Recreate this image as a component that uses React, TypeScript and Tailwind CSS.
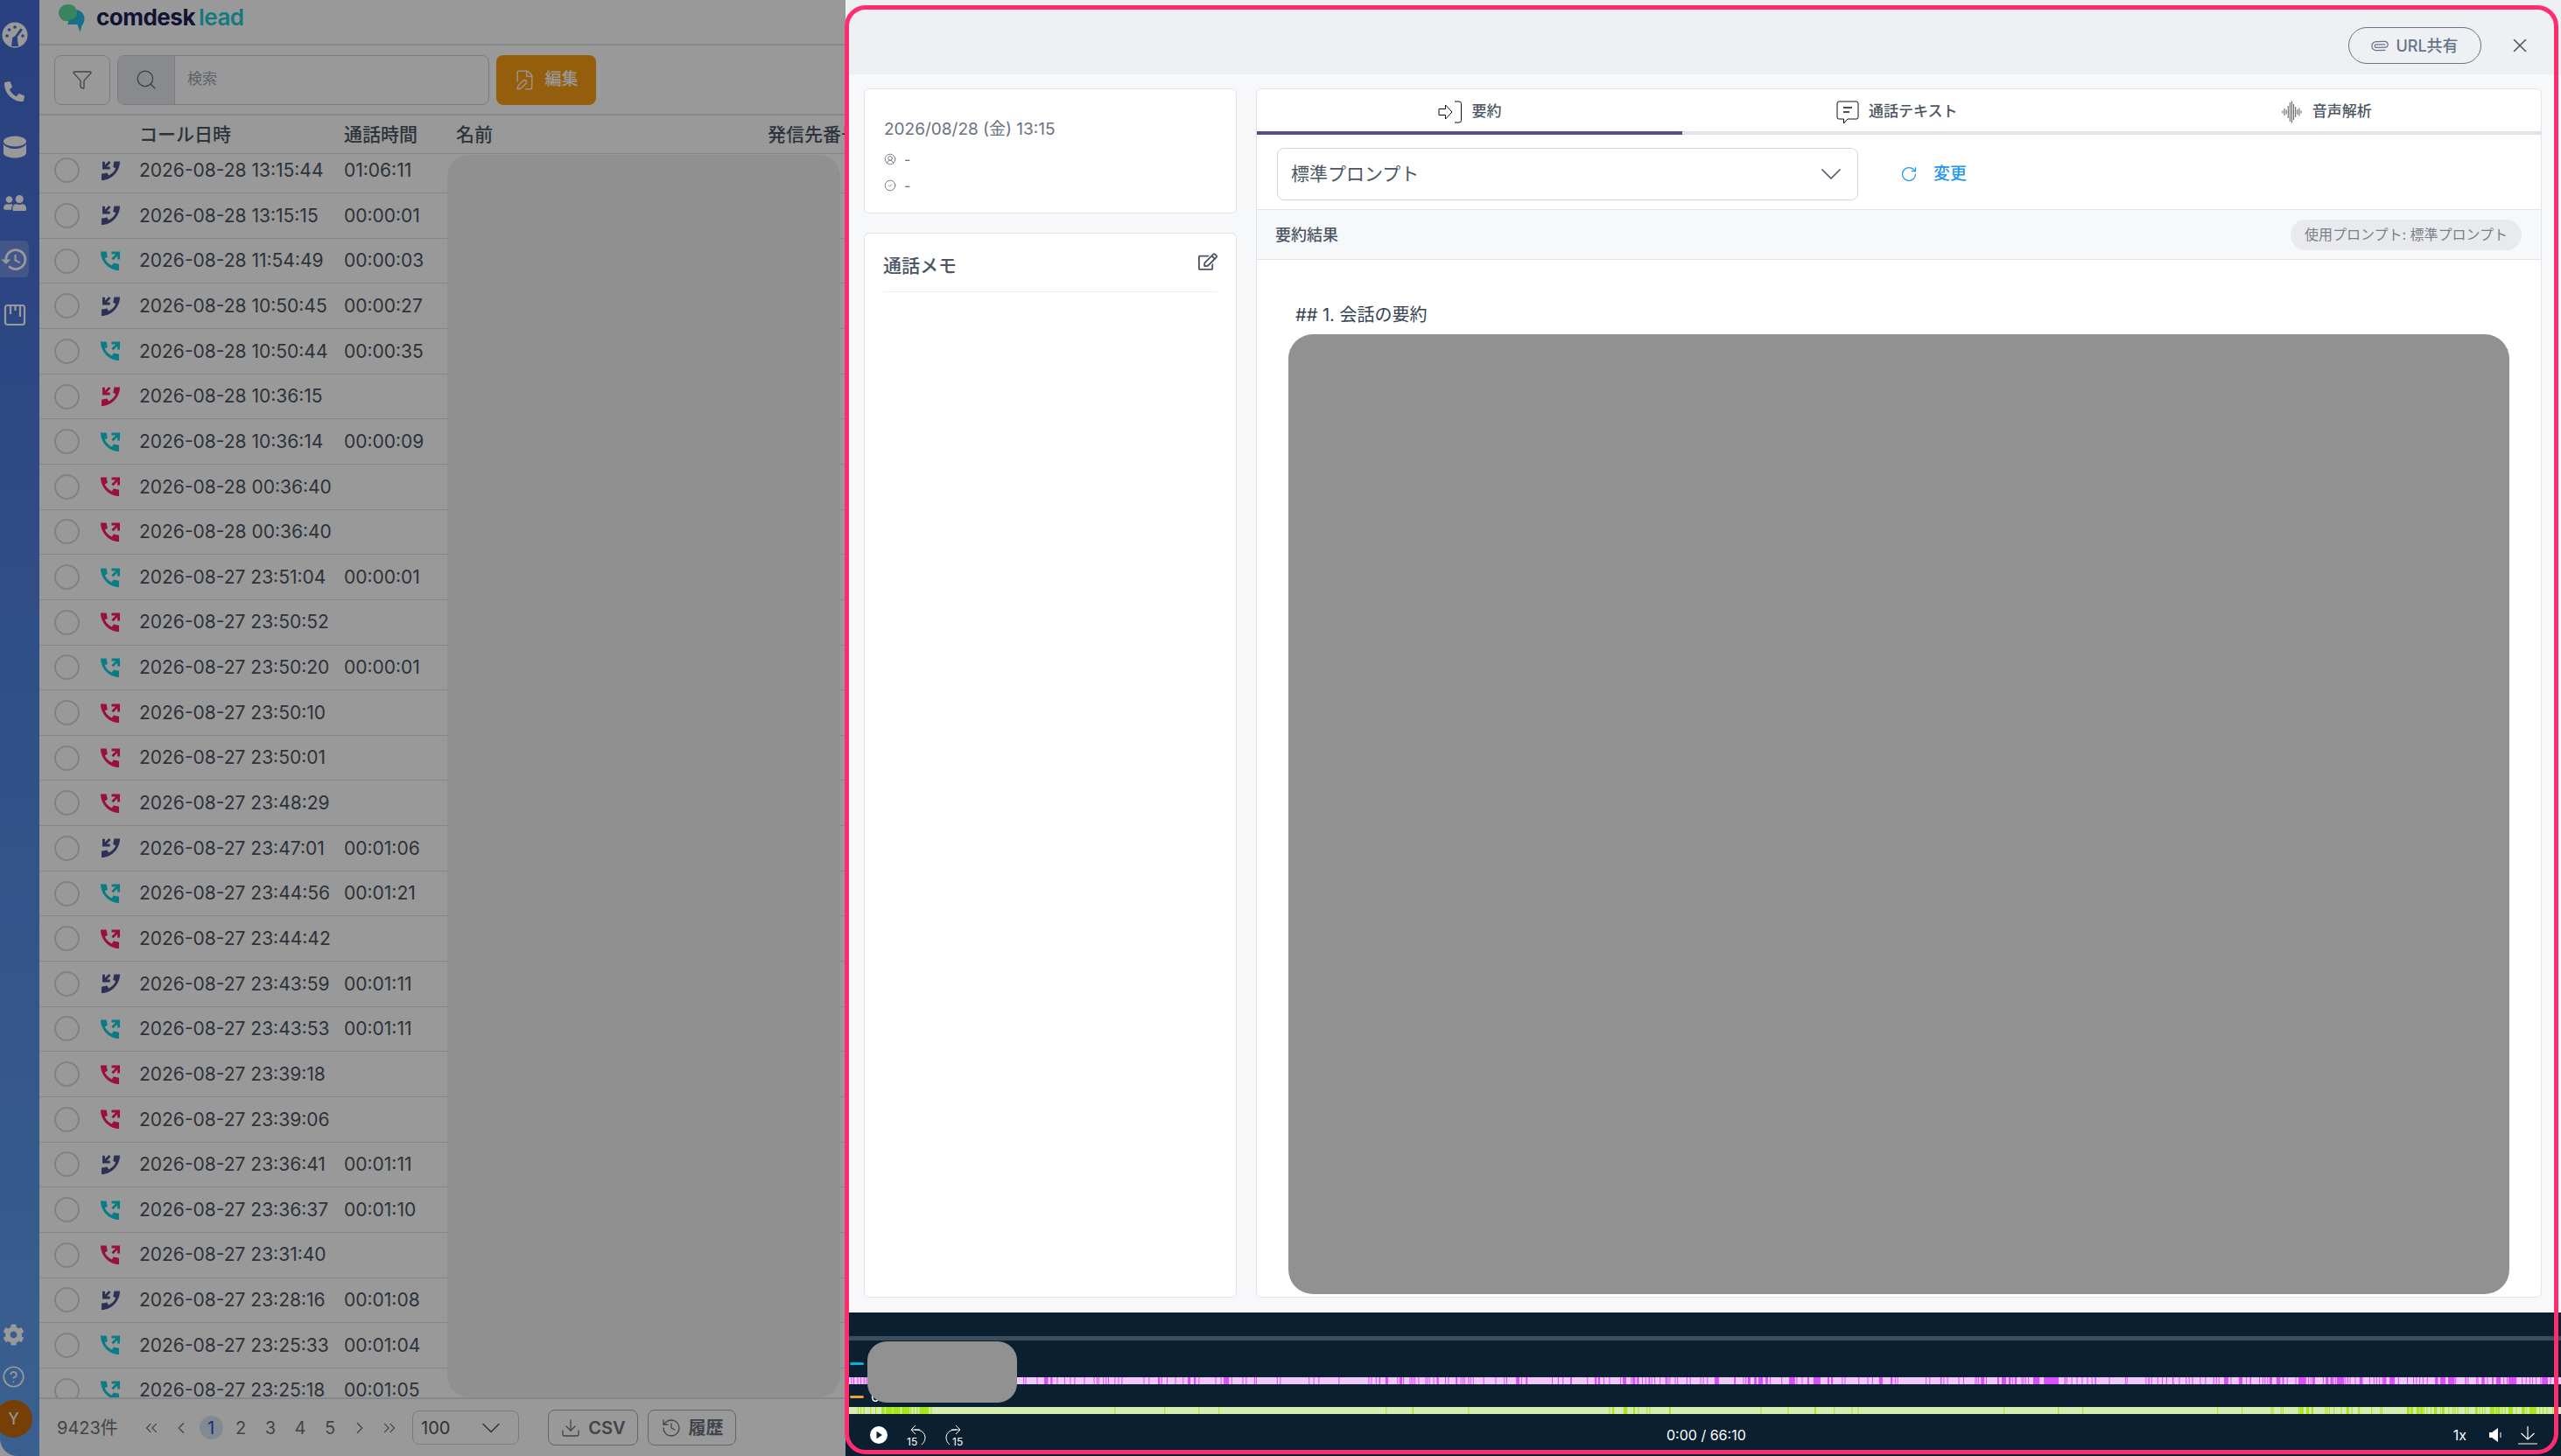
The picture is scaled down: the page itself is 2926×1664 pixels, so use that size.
import { ChevronDown, ChevronLeft, ChevronRight, ChevronsLeft, ChevronsRight, CircleCheck, CircleHelp, CircleUserRound, Download, FilePen, Funnel, History, Paperclip, RotateCw, Search, X } from "lucide-react";
import { FaCog, FaPhoneAlt, FaRegEdit, FaUserFriends } from "react-icons/fa";
import { MdHistory } from "react-icons/md";

type CallKind = "in" | "out" | "missedIn" | "missedOut";
type Mark = number | [number, number];

const calls: Array<[string, string, CallKind]> = [
  ["2026-08-28 13:15:44", "01:06:11", "in"],
  ["2026-08-28 13:15:15", "00:00:01", "in"],
  ["2026-08-28 11:54:49", "00:00:03", "out"],
  ["2026-08-28 10:50:45", "00:00:27", "in"],
  ["2026-08-28 10:50:44", "00:00:35", "out"],
  ["2026-08-28 10:36:15", "", "missedIn"],
  ["2026-08-28 10:36:14", "00:00:09", "out"],
  ["2026-08-28 00:36:40", "", "missedOut"],
  ["2026-08-28 00:36:40", "", "missedOut"],
  ["2026-08-27 23:51:04", "00:00:01", "out"],
  ["2026-08-27 23:50:52", "", "missedOut"],
  ["2026-08-27 23:50:20", "00:00:01", "out"],
  ["2026-08-27 23:50:10", "", "missedOut"],
  ["2026-08-27 23:50:01", "", "missedOut"],
  ["2026-08-27 23:48:29", "", "missedOut"],
  ["2026-08-27 23:47:01", "00:01:06", "in"],
  ["2026-08-27 23:44:56", "00:01:21", "out"],
  ["2026-08-27 23:44:42", "", "missedOut"],
  ["2026-08-27 23:43:59", "00:01:11", "in"],
  ["2026-08-27 23:43:53", "00:01:11", "out"],
  ["2026-08-27 23:39:18", "", "missedOut"],
  ["2026-08-27 23:39:06", "", "missedOut"],
  ["2026-08-27 23:36:41", "00:01:11", "in"],
  ["2026-08-27 23:36:37", "00:01:10", "out"],
  ["2026-08-27 23:31:40", "", "missedOut"],
  ["2026-08-27 23:28:16", "00:01:08", "in"],
  ["2026-08-27 23:25:33", "00:01:04", "out"],
  ["2026-08-27 23:25:18", "00:01:05", "out"],
];

// bar marks, read off the recording timeline: [origin px, scale, marks]
const pinkMarks: Array<[number, number, Mark[]]> = [
  [950, 2.24, [50, 56, 66, 74, 82, 88]],
  [1160, 2.613, [24, 30, 64, [86, 12], [105, 6], 124, 146, 163, 176, 205, 234, 243, 248, 262, 270, 277, 296, 307, 317, 383, 398, [426, 6], 436, 452, 477, 500, [515, 8], [533, 6], 547, 597, 613, [622, 16], 645, 678, 688, 713, 718, 781, 790, 876, 890, 905, 965, 1054, 1062, 1076, [1086, 4], [1105, 8], 1140, [1147, 8], 1158, 1177, 1182, 1187, 1192, 1203, 1224, 1229, 1235, 1248, [1258, 6], 1283, 1292, [1315, 5], 1329, 1335, 1340, 1352, 1358, 1366, 1397, 1433, 1459, 1466, [1495, 10], 1510, [1524, 5]]],
  [1760, 2.613, [34, 52, 66, [89, 5], 139, [162, 6], [172, 6], 188, 205, 238, [246, 10], 270, [275, 8], [288, 6], 303, 313, [323, 4], 331, 340, 356, [373, 5], 380, 385, 401, 408, 436, 446, 477, 485, 497, [520, 13], [578, 5], 605, 612, [619, 8], [638, 7], [651, 13], [672, 7], 685, 719, [742, 18], 764, 780, [797, 5], [815, 21], [857, 5], [868, 5], 900, 908, 949, 976, 990, [1011, 8], 1019, [1045, 6], 1058, 1065, 1150, 1161, [1194, 4], 1203, 1214, 1248, 1262, 1297, 1302, 1307, [1315, 10], 1330, [1364, 5], [1377, 13], [1398, 6], 1408, [1416, 6], 1436, 1441, 1447, 1456, [1471, 19], [1503, 44], 1565]],
  [2340, 2.676, [[0, 32], 50, 56, 71, 87, 103, 119, 133, [143, 4], 186, 235, 240, 298, [306, 4], 315, 334, 348, 361, [380, 4], 400, 421, 430, [440, 3], 464, 480, 505, 513, 521, [538, 13], 558, [583, 11], 605, [617, 4], 645, 655, 662, 670, [677, 8], [698, 12], [716, 5], 730, 756, [765, 24], 795, 802, [808, 8], 840, [849, 8], [863, 8], 871, 878, [883, 22], 908, 915, 922, 938, [952, 10], 982, 995, 1003, 1012, 1021, [1024, 10], [1044, 16], 1070, 1097, 1116, 1125, 1135, 1145, 1158, [1183, 9], [1199, 16], [1223, 20], 1245, [1275, 4], 1283, 1309, 1313, [1325, 10], 1342, [1357, 5], [1370, 14], 1392, 1402, [1407, 25], 1448, 1460, 1472, 1480, 1491, 1505, [1510, 18], 1535]],
];

const greenMarks: Array<[number, number, Mark[]]> = [
  [950, 2.24, [67, 74, 82, 99, 112, 128, [130, 6], [139, 17], [158, 18], [180, 20], 202, 210, 218, [225, 24], 254]],
  [1160, 2.613, [296, 445, 547, 607, 1106, [1185, 4], 1352]],
  [1760, 2.613, [205, [214, 6], [248, 11], [277, 5], 291, 317, 325, [384, 5], 657, 738, [818, 5], 876, 929, 947, 1383, 1545]],
  [2340, 2.676, [30, 105, 517, 592, 681, 686, 711, 717, 765, [769, 12], [789, 9], [805, 6], 847, 853, 859, 873, 895, [912, 8], 928, [948, 5], 988, 1015, 1020, [1097, 8], [1108, 8], [1126, 10], [1138, 8], 1148, 1157, 1169, [1180, 9], 1198, [1204, 8], 1224, 1237, 1243, 1251, 1275, 1283, [1306, 7], 1318, 1327, 1334, [1351, 14], [1368, 5], [1374, 8], 1387, [1396, 3], [1407, 14], 1430, [1448, 10], 1462, [1471, 22], 1502, 1512, 1524, 1542, [1555, 4]]],
];

function TimelineBar({ groups, color, className }: { groups: Array<[number, number, Mark[]]>; color: string; className: string }) {
  return (
    <svg className={className} width="1960" height="8" viewBox="0 0 1960 8">
      {groups.map(([origin, scale, marks]) =>
        marks.map((mark) => {
          const [start, size] = Array.isArray(mark) ? mark : [mark, 2.4];
          return <rect key={`${origin}-${start}`} x={origin + start / scale - 966} y="0" width={Math.max(size / scale, 1)} height="8" fill={color} />;
        }),
      )}
    </svg>
  );
}

function CallIcon({ kind }: { kind: CallKind }) {
  const incoming = kind === "in" || kind === "missedIn";
  const color = kind === "in" ? "text-[#4b5390]" : kind === "out" ? "text-[#12cfe0]" : "text-[#ff1a6c]";
  return (
    <svg className={`h-[24px] w-[24px] shrink-0 ${color}`} viewBox="0 0 24 24" fill="currentColor">
      <g transform={incoming ? "translate(24,0) scale(-1,1)" : undefined}>
        <path d="M1 1.5h6.6l1.2 6.2-3 1.9c1.5 3.4 4.600 6.500 8 8l1.900-3 6.300 1.200V23C10.500 23 1 13 1 1.500Z" />
      </g>
      {incoming ? (
        <path d="M10.500 1 5.900 5.600V1.800H3V10.500h8.700V7.600H7.900l4.600-4.600Z" />
      ) : (
        <path d="M13.500 1.500h9.500v9h-2.900V6.500l-4.700 4.700-2-2 4.700-4.700h-4.600Z" />
      )}
    </svg>
  );
}

function GaugeIcon() {
  return (
    <svg className="h-[30px] w-[30px]" viewBox="0 0 30 30">
      <circle cx="15" cy="15" r="14.500" fill="#fff" />
      <g fill="#466bd5">
        <circle cx="6" cy="16" r="1.800" />
        <circle cx="8.500" cy="9" r="1.800" />
        <circle cx="15" cy="6" r="1.800" />
        <circle cx="24" cy="16" r="1.800" />
        <path d="M21.500 7.500 24 9l-6.500 8.500a3.500 3.500 0 0 1 .5 3.500L19 28h-8l1-7a3.500 3.500 0 0 1 3-4.500Z" />
      </g>
    </svg>
  );
}

function DatabaseIcon() {
  return (
    <svg className="h-[28px] w-[28px] text-white" viewBox="0 0 28 28" fill="currentColor">
      <ellipse cx="14" cy="7.500" rx="13" ry="6" />
      <path d="M1 10.500v10c0 3.500 5.800 6 13 6s13-2.500 13-6v-10c-2 3.600-7.200 5.500-13 5.500S3 14.100 1 10.500Z" />
    </svg>
  );
}

function BoardIcon() {
  return (
    <svg className="h-[26px] w-[26px]" viewBox="0 0 26 26" fill="none" stroke="#fff" strokeWidth="2.200">
      <rect x="2" y="2" width="22" height="22" rx="2.500" />
      <path d="M8 2v10M13.500 2v6M19 2v13" />
    </svg>
  );
}

function Logo() {
  return (
    <svg className="h-[33px] w-[30px] shrink-0" viewBox="0 0 30 33">
      <path d="M11 1c6 0 10 4 10 9.500S16 20 11 20H8l-2 0C2.500 18 0 14.500 0 10.500 0 5 5 1 11 1Z" fill="#5fdc9f" />
      <path d="M20 7c5.500 1 9.500 5 9.500 10 0 4-1.500 6.500-3 8.500L24.500 33l-3-9H10.500l1-5c5.500 0 9.500-4 9.500-8.500 0-1.500-.3-2.500-1-3.500Z" fill="#2ab8ee" />
      <path d="M20 7c.7 1 1 2 1 3.500 0 4.500-4 8.500-9.500 8.500l-1 5 4-4c4 0 8-1 8-6 0-3-1-5.500-2.500-7Z" fill="#16c8b4" />
    </svg>
  );
}

function SummaryTabIcon() {
  return (
    <svg className="h-[26px] w-[28px]" viewBox="0 0 28 26" fill="none" stroke="#111" strokeWidth="1">
      <path d="M1 9.500h7.500V5L16 13l-7.500 8v-4.500H1Z" />
      <path d="M19 1h5a2.500 2.500 0 0 1 2.500 2.500v19A2.500 2.500 0 0 1 24 25h-5" />
    </svg>
  );
}

function TextTabIcon() {
  return (
    <svg className="h-[27px] w-[26px]" viewBox="0 0 26 27" fill="none" stroke="#111" strokeWidth="1">
      <path d="M3 1h20a2 2 0 0 1 2 2v16a2 2 0 0 1-2 2H13l-4.500 5v-5H3a2 2 0 0 1-2-2V3a2 2 0 0 1 2-2Z" />
      <path d="M8 8h10M8 13h7" strokeWidth="1.400" />
    </svg>
  );
}

function WaveTabIcon() {
  const bars = [3, 8, 5, 14, 22, 25, 18, 12, 6, 9, 3];
  return (
    <svg className="h-[26px] w-[25px]" viewBox="0 0 25 26" stroke="#111" strokeWidth="0.700">
      {bars.map((height, index) => (
        <line key={index} x1={2 + index * 2.100} x2={2 + index * 2.100} y1={13 - height / 2} y2={13 + height / 2} />
      ))}
    </svg>
  );
}

function SkipIcon({ forward }: { forward?: boolean }) {
  return (
    <svg className="h-[26px] w-[22px] text-white" viewBox="0 0 22 26" fill="none" stroke="currentColor" strokeWidth="1">
      {forward ? (
        <>
          <path d="M7 7H16M12 2l5 5-5 5" />
          <path d="M13 7C6 6.500 1 10.500 1 16c0 3 1.500 6 4 8" />
        </>
      ) : (
        <>
          <path d="M15 7H6M10 2 5 7l5 5" />
          <path d="M9 7c7-.5 12 3.500 12 9 0 3-1.500 6-4 8" />
        </>
      )}
      <text x={forward ? 8 : 0} y="25" fontSize="12" fill="currentColor" stroke="none">15</text>
    </svg>
  );
}

function Sidebar() {
  return (
    <aside className="flex h-full w-[45px] shrink-0 flex-col overflow-hidden rounded-bl-[20px] bg-gradient-to-b from-[#466bd5] to-[#61a0f0] pb-[21px] pt-[8px] text-white">
      <div className="flex h-[64px] w-[33px] items-center justify-center"><GaugeIcon /></div>
      <div className="flex h-[64px] w-[33px] items-center justify-center"><FaPhoneAlt className="h-[23px] w-[23px]" /></div>
      <div className="flex h-[64px] w-[33px] items-center justify-center"><DatabaseIcon /></div>
      <div className="flex h-[64px] w-[33px] items-center justify-center"><FaUserFriends className="h-[26px] w-[26px] -scale-x-100" /></div>
      <div className="flex h-[64px] w-[33px] items-center justify-center">
        <div className="flex h-[42px] w-full items-center justify-center rounded-r-[6px] bg-white/20"><MdHistory className="h-[35px] w-[35px]" /></div>
      </div>
      <div className="flex h-[64px] w-[33px] items-center justify-center"><BoardIcon /></div>
      <div className="mt-auto flex h-[48px] w-[30px] items-center justify-center"><FaCog className="h-[25px] w-[25px]" /></div>
      <div className="mb-[3px] flex h-[48px] w-[30px] items-center justify-center"><CircleHelp className="h-[27px] w-[27px]" strokeWidth={1.500} /></div>
      <div className="-ml-[6px] flex h-[43px] w-[43px] shrink-0 items-center justify-center rounded-full bg-[#c56a0c] text-[18px]">Y</div>
    </aside>
  );
}

function CallList() {
  return (
    <section className="flex min-w-0 flex-1 flex-col bg-white">
      <div className="flex h-[52px] shrink-0 items-center border-b-2 border-[#e0e2e6] pb-[10px] pl-[22px]">
        <Logo />
        <span className="ml-[13px] text-[26px] font-bold leading-none tracking-[-0.5px] text-[#1b2255]">comdesk</span>
        <span className="ml-[4px] text-[26px] font-semibold leading-none tracking-[-0.5px] text-[#1ccbd6]">lead</span>
      </div>
      <div className="flex h-[80px] shrink-0 items-center gap-[8px] border-b-2 border-[#e0e2e6] px-[17px]">
        <div className="flex h-[57px] w-[64px] items-center justify-center rounded-[8px] border border-[#ccd0d6]"><Funnel className="h-[24px] w-[24px] text-[#6b7280]" strokeWidth={1.300} /></div>
        <div className="flex h-[57px] w-[425px] overflow-hidden rounded-[8px] border border-[#ccd0d6]">
          <div className="flex w-[65px] items-center justify-center border-r border-[#ccd0d6] bg-[#e5e7eb]"><Search className="h-[26px] w-[26px] text-[#6b7280]" strokeWidth={1.300} /></div>
          <span className="flex items-center pl-[14px] text-[17px] text-[#9ca3af]">検索</span>
        </div>
        <div className="flex h-[57px] w-[114px] items-center justify-center gap-[10px] rounded-[8px] bg-[#f79d17] text-[19px] font-medium text-white"><FilePen className="h-[25px] w-[25px]" strokeWidth={1.300} />編集</div>
      </div>
      <div className="flex h-[44px] shrink-0 items-center overflow-hidden border-b border-[#dcdfe4] text-[21px] font-medium leading-none text-[#4b5563]">
        <span className="w-[348px] shrink-0 pl-[114px]">コール日時</span>
        <span className="w-[128px] shrink-0">通話時間</span>
        <span className="w-[356px] shrink-0">名前</span>
        <span className="shrink-0 whitespace-nowrap">発信先番号</span>
      </div>
      <div className="relative min-h-0 flex-1 overflow-hidden">
        <div className="-mt-[6.500px]">
          {calls.map(([date, duration, kind], index) => (
            <div key={index} className="flex h-[51.650px] items-center border-b border-[#dcdfe4] pl-[17px] text-[21px] text-[#4b5563]">
              <span className="h-[29px] w-[29px] shrink-0 rounded-full border-2 border-[#d4d8de]" />
              <span className="ml-[24px] flex w-[22px] justify-center"><CallIcon kind={kind} /></span>
              <span className="ml-[22px] w-[234px] shrink-0">{date}</span>
              <span>{duration}</span>
            </div>
          ))}
        </div>
        <div className="absolute bottom-0 left-[466px] top-[1px] w-[449px] rounded-[25px] bg-[#f1f1f1]" />
      </div>
      <div className="flex h-[67px] shrink-0 items-center border-t-2 border-[#e0e2e6] pl-[20px] text-[20px] text-[#6b7280]">
        <span className="w-[91px]">9423件</span>
        <span className="flex w-[34px] justify-center"><ChevronsLeft className="h-[22px] w-[22px]" strokeWidth={1.300} /></span>
        <span className="flex w-[34px] justify-center"><ChevronLeft className="h-[22px] w-[22px]" strokeWidth={1.300} /></span>
        <span className="flex w-[34px] justify-center"><span className="flex h-[27px] w-[27px] items-center justify-center rounded-full bg-[#dbe4f0] text-[#1d4ed8]">1</span></span>
        {["2", "3", "4", "5"].map((page) => (
          <span key={page} className="flex w-[34px] justify-center">{page}</span>
        ))}
        <span className="flex w-[34px] justify-center"><ChevronRight className="h-[22px] w-[22px]" strokeWidth={1.300} /></span>
        <span className="flex w-[34px] justify-center"><ChevronsRight className="h-[22px] w-[22px]" strokeWidth={1.300} /></span>
        <div className="ml-[9px] flex h-[39px] w-[122px] items-center justify-between rounded-[8px] border border-[#c9ced6] pl-[9px] pr-[13px] text-[#4b5563]">100<ChevronDown className="h-[36px] w-[36px]" strokeWidth={1} /></div>
        <div className="ml-[33px] flex h-[41px] w-[103px] items-center justify-center gap-[8px] rounded-[8px] border-[1.500px] border-[#a3a8af] font-semibold"><Download className="h-[24px] w-[24px]" strokeWidth={1.300} />CSV</div>
        <div className="ml-[11px] flex h-[41px] w-[101px] items-center justify-center gap-[8px] rounded-[8px] border-[1.500px] border-[#a3a8af] font-semibold"><History className="h-[24px] w-[24px]" strokeWidth={1.300} />履歴</div>
      </div>
    </section>
  );
}

function CallDetail() {
  return (
    <section className="relative flex h-full w-[1960px] shrink-0 flex-col bg-[#f7f8fa]">
      <header className="flex h-[85px] shrink-0 justify-end bg-[#eff0f4] pr-[34px] pt-[31px]">
        <button className="flex h-[42px] w-[152px] items-center justify-center gap-[8px] rounded-full border border-[#64748b] text-[18px] font-medium text-[#64748b]"><Paperclip className="h-[20px] w-[20px] rotate-45" strokeWidth={1.500} />URL共有</button>
        <X className="ml-[31px] mt-[8px] h-[26px] w-[26px] text-[#4b5563]" strokeWidth={1.500} />
      </header>
      <div className="flex min-h-0 flex-1 gap-[22px] pb-[17px] pl-[21px] pr-[22px] pt-[16px]">
        <div className="flex w-[426px] shrink-0 flex-col gap-[22px]">
          <div className="h-[143px] rounded-[6px] border border-[#e2e4ea] bg-white pl-[22px] pt-[33px] text-[#6b7280]">
            <div className="text-[19px] leading-[26px]">2026/08/28 (金) 13:15</div>
            <div className="mt-[6px] flex h-[30px] items-center gap-[9px] text-[16px]"><CircleUserRound className="h-[14px] w-[14px]" strokeWidth={1.500} />-</div>
            <div className="flex h-[30px] items-center gap-[9px] text-[16px]"><CircleCheck className="h-[14px] w-[14px]" strokeWidth={1.500} />-</div>
          </div>
          <div className="flex-1 rounded-[6px] border border-[#e2e4ea] bg-white px-[21px] pt-[21px]">
            <div className="flex items-start justify-between border-b border-[#eceef2] pb-[14px]">
              <span className="pt-[1px] text-[21px] font-medium leading-[30px] text-[#4b5563]">通話メモ</span>
              <FaRegEdit className="mt-[1px] h-[20px] w-[22px] text-[#4b5563]" />
            </div>
          </div>
        </div>
        <div className="flex min-w-0 flex-1 flex-col rounded-[6px] border border-[#e2e4ea] bg-white">
          <div className="grid h-[52px] shrink-0 grid-cols-[486px_1fr_1fr] text-[17px] font-medium text-[#4b5563]">
            <div className="flex items-center justify-center gap-[11px] border-b-4 border-[#54507c] pt-[4px]"><SummaryTabIcon />要約</div>
            <div className="flex items-center justify-center gap-[11px] border-b-4 border-[#e0e2e8] pt-[4px]"><TextTabIcon />通話テキスト</div>
            <div className="flex items-center justify-center gap-[11px] border-b-4 border-[#e0e2e8] pt-[4px]"><WaveTabIcon />音声解析</div>
          </div>
          <div className="flex h-[86px] shrink-0 items-start border-b border-[#e2e4ea] pl-[23px] pt-[15px]">
            <div className="flex h-[60px] w-[664px] items-center justify-between rounded-[8px] border border-[#d1d5db] pl-[15px] pr-[10px] text-[21px] text-[#4b5563]">標準プロンプト<ChevronDown className="h-[40px] w-[40px]" strokeWidth={1} /></div>
            <div className="ml-[48px] flex h-[60px] items-center gap-[18px] text-[19px] font-medium text-[#2196f3]"><RotateCw className="h-[20px] w-[20px]" strokeWidth={1.500} />変更</div>
          </div>
          <div className="flex h-[57px] shrink-0 items-center justify-between border-b border-[#e2e4ea] bg-[#f7f8fa] pl-[21px] pr-[22px]">
            <span className="pt-[1px] text-[18px] font-medium text-[#4b5563]">要約結果</span>
            <span className="flex h-[35px] w-[264px] items-center justify-center rounded-full bg-[#e9eaee] text-[16px] text-[#7b8087]">使用プロンプト: 標準プロンプト</span>
          </div>
          <div className="flex min-h-0 flex-1 flex-col pb-[3px] pl-[36px] pr-[36px] pt-[50px]">
            <p className="pl-[8px] text-[20px] leading-[26px] text-[#374151]">## 1. 会話の要約</p>
            <div className="mt-[9px] flex-1 rounded-[28px] bg-[#919191]" />
          </div>
        </div>
      </div>
      <div className="relative flex h-[164px] shrink-0 flex-col bg-[#0a2030] text-white">
        <div className="mt-[27px] h-[5px] bg-[#3d4d5a]" />
        <div className="ml-[5px] mt-[25px] h-[3px] w-[16px] rounded-full bg-[#00b4d8]" />
        <div className="mt-[14px] h-[8px] bg-[#f0c8fa]"><TimelineBar groups={pinkMarks} color="#d850fa" className="block" /></div>
        <div className="ml-[5px] mt-[13px] h-[3px] w-[16px] rounded-full bg-[#f0a030]" />
        <div className="mt-[10px] h-[8px] bg-[#d6ecb0]"><TimelineBar groups={greenMarks} color="#a8e61c" className="block" /></div>
        <div className="flex min-h-0 flex-1 items-center pl-[28px] pr-[27px] text-[16px]">
          <svg className="h-[20px] w-[20px]" viewBox="0 0 20 20"><circle cx="10" cy="10" r="10" fill="#fff" /><path d="M7.500 5.800 14 10l-6.500 4.200Z" fill="#0a2030" /></svg>
          <span className="ml-[22px]"><SkipIcon /></span>
          <span className="ml-[22px]"><SkipIcon forward /></span>
          <span className="flex-1 pr-[6px] text-center">0:00 / 66:10</span>
          <span>1x</span>
          <svg className="ml-[25px] h-[18px] w-[18px]" viewBox="0 0 18 18" fill="#fff"><path d="M1 6h3l7-5v16l-7-5H1Z" /><path d="M14 6v6" stroke="#fff" strokeWidth="1" /></svg>
          <svg className="ml-[16px] h-[21px] w-[22px]" viewBox="0 0 22 21" fill="none" stroke="#fff" strokeWidth="1.200"><path d="M11 0v15M3.500 8 11 15l7.500-7M0 20h22" /></svg>
        </div>
        <span className="absolute left-[29px] top-[84px] text-[16px]">0</span>
        <div className="absolute left-[25px] top-[33px] h-[70px] w-[171px] rounded-[22px] bg-[#919191]" />
      </div>
    </section>
  );
}

export default function App() {
  return (
    <div className="relative flex h-[1664px] w-[2926px] overflow-hidden bg-white font-['Inter','Noto_Sans_CJK_JP',sans-serif]">
      <div className="relative flex h-full w-[966px] shrink-0">
        <Sidebar />
        <CallList />
        <div className="absolute inset-0 bg-black/40" />
      </div>
      <CallDetail />
      <div className="pointer-events-none absolute left-[965px] top-[6px] h-[1656px] w-[1958px] rounded-[24px] border-[5px] border-[#ff2d6f]" />
    </div>
  );
}
